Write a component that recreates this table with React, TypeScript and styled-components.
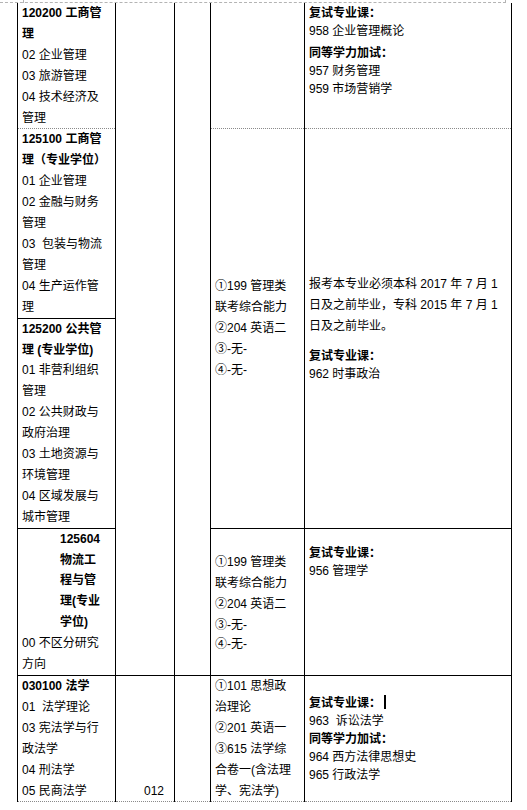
import styled, { createGlobalStyle } from "styled-components";

type Edge = "solid" | "dotted" | "none";
type VAlign = "top" | "middle" | "bottom";

const GlobalStyle = createGlobalStyle`
  html, body {
    margin: 0;
    padding: 0;
    background: #fff;
  }
  body {
    font-family: "Liberation Sans", "Noto Sans CJK SC", sans-serif;
    font-size: 12px;
    color: #000;
  }
`;

const edge = (e?: Edge) =>
  e === "solid" ? "1px solid #000" : e === "dotted" ? "1px dotted #8a8a8a" : "none";

/* Word 页面的版心线 */
const CropLine = styled.div`
  position: relative;
  width: 506px;
  height: 2px;
  border-bottom: 1px dashed #b4b4b4;

  &::before,
  &::after {
    content: "";
    position: absolute;
    top: 0;
    width: 1px;
    height: 3px;
    background: #b4b4b4;
  }
  &::before { left: 23px; }
  &::after { left: 505px; }
`;

const Sheet = styled.table`
  border-collapse: collapse;
  table-layout: fixed;
  width: 494px;
  margin-left: 17px;
`;

const Cell = styled.td<{ $v?: VAlign; $top?: Edge; $bottom?: Edge; $pad?: string }>`
  border-left: 1px solid #000;
  border-right: 1px solid #000;
  border-top: ${({ $top }) => edge($top)};
  border-bottom: ${({ $bottom }) => edge($bottom)};
  vertical-align: ${({ $v }) => $v ?? "top"};
  padding: ${({ $pad }) => $pad ?? "0 8px 0 4px"};
  overflow: hidden;
`;

const Line = styled.div<{ $bold?: boolean; $lh?: number }>`
  line-height: ${({ $lh }) => $lh ?? 20.9}px;
  font-weight: ${({ $bold }) => ($bold ? 700 : 400)};
  white-space: pre-wrap;
  word-break: break-all;
`;

const Indented = styled(Line)`
  margin-left: 38px;
  margin-right: 4px;
`;

const Heading = styled.div<{ $gap?: number }>`
  line-height: 18px;
  font-weight: 700;
  margin-top: ${({ $gap }) => $gap ?? 0}px;
`;

const Course = styled.div`
  line-height: 18px;
  white-space: pre-wrap;
`;

const Note = styled.div`
  line-height: 21px;
`;

const Code = styled.div`
  line-height: 20.9px;
  text-align: right;
  padding-right: 10px;
`;

const Caret = styled.span`
  display: inline-block;
  width: 2px;
  height: 14px;
  margin-left: 3px;
  background: #000;
  vertical-align: -2px;
`;

const col1Pad = "0 8px 0 4px";
const col4Pad = "0 9px 0 4px";
const col5Pad = "0 12px 0 4px";

export default function App() {
  return (
    <>
      <GlobalStyle />
      <CropLine />
      <Sheet>
        <colgroup>
          <col style={{ width: 98 }} />
          <col style={{ width: 59 }} />
          <col style={{ width: 36 }} />
          <col style={{ width: 94 }} />
          <col style={{ width: 207 }} />
        </colgroup>
        <tbody>
          {/* 120200 工商管理 */}
          <tr>
            <Cell $bottom="dotted" $pad={col1Pad}>
              <Line $bold>120200 工商管理</Line>
              <Line>02 企业管理</Line>
              <Line>03 旅游管理</Line>
              <Line>04 技术经济及管理</Line>
            </Cell>
            <Cell rowSpan={4} $bottom="solid" />
            <Cell rowSpan={4} $bottom="solid" />
            <Cell $bottom="dotted" $pad={col4Pad} />
            <Cell $bottom="dotted" $pad="1px 12px 0 4px">
              <Heading>复试专业课：</Heading>
              <Course>958 企业管理概论</Course>
              <Heading $gap={4}>同等学力加试：</Heading>
              <Course>957 财务管理</Course>
              <Course>959 市场营销学</Course>
            </Cell>
          </tr>

          {/* 125100 工商管理（专业学位） */}
          <tr>
            <Cell $bottom="solid" $pad={col1Pad}>
              <Line $bold>125100 工商管理（专业学位）</Line>
              <Line>01 企业管理</Line>
              <Line>02 金融与财务管理</Line>
              <Line>03  包装与物流管理</Line>
              <Line>04 生产运作管理</Line>
            </Cell>
            <Cell rowSpan={2} $v="middle" $bottom="solid" $pad={col4Pad}>
              <Line>①199 管理类联考综合能力</Line>
              <Line>②204 英语二</Line>
              <Line>③-无-</Line>
              <Line>④-无-</Line>
            </Cell>
            <Cell rowSpan={2} $v="middle" $bottom="solid" $pad={col5Pad}>
              <Note>
                报考本专业必须本科 2017 年 7 月 1 日及之前毕业，专科 2015 年 7 月 1 日及之前毕业。
              </Note>
              <Heading $gap={10}>复试专业课：</Heading>
              <Course>962 时事政治</Course>
            </Cell>
          </tr>

          {/* 125200 公共管理(专业学位) */}
          <tr>
            <Cell $bottom="solid" $pad={col1Pad}>
              <Line $bold>125200 公共管理 (专业学位)</Line>
              <Line>01 非营利组织管理</Line>
              <Line>02 公共财政与政府治理</Line>
              <Line>03 土地资源与环境管理</Line>
              <Line>04 区域发展与城市管理</Line>
            </Cell>
          </tr>

          {/* 125604 物流工程与管理 */}
          <tr>
            <Cell $bottom="solid" $pad={col1Pad}>
              <Indented $bold>125604 物流工程与管理(专业学位)</Indented>
              <Line>00 不区分研究方向</Line>
            </Cell>
            <Cell $v="middle" $bottom="solid" $pad={col4Pad}>
              <Line>①199 管理类联考综合能力</Line>
              <Line>②204 英语二</Line>
              <Line>③-无-</Line>
              <Line $lh={16}>④-无-</Line>
            </Cell>
            <Cell $bottom="solid" $pad="15px 12px 0 4px">
              <Heading>复试专业课：</Heading>
              <Course>956 管理学</Course>
            </Cell>
          </tr>

          {/* 030100 法学 */}
          <tr>
            <Cell $bottom="dotted" $pad={col1Pad}>
              <Line $bold>030100 法学</Line>
              <Line>01  法学理论</Line>
              <Line>03 宪法学与行政法学</Line>
              <Line>04 刑法学</Line>
              <Line>05 民商法学</Line>
            </Cell>
            <Cell $v="bottom" $bottom="dotted" $pad="0">
              <Code>012</Code>
            </Cell>
            <Cell $bottom="dotted" $pad="0" />
            <Cell $bottom="dotted" $pad={col4Pad}>
              <Line>①101 思想政治理论</Line>
              <Line>②201 英语一</Line>
              <Line>③615 法学综合卷一(含法理学、宪法学)</Line>
            </Cell>
            <Cell $v="middle" $bottom="dotted" $pad={col5Pad}>
              <Heading>
                复试专业课：<Caret />
              </Heading>
              <Course>963  诉讼法学</Course>
              <Heading>同等学力加试：</Heading>
              <Course>964 西方法律思想史</Course>
              <Course>965 行政法学</Course>
            </Cell>
          </tr>
        </tbody>
      </Sheet>
    </>
  );
}
